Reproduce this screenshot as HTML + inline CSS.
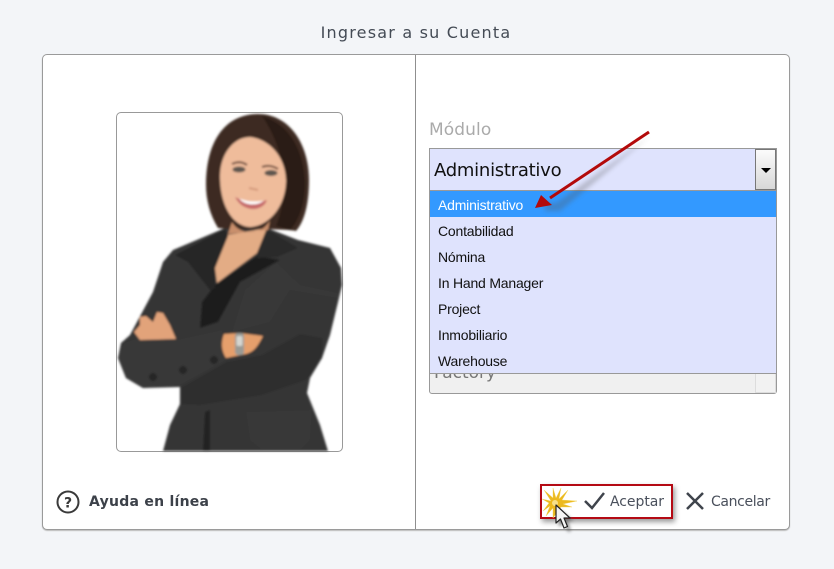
<!DOCTYPE html>
<html><head><meta charset="utf-8"><style>
html,body{margin:0;padding:0;width:834px;height:569px;overflow:hidden;background:#f3f5f8}
body{position:relative;font-family:"DejaVu Sans","Liberation Sans",sans-serif}
div{position:absolute;box-sizing:border-box;white-space:nowrap}
.it{left:430px;width:346px;height:26px;padding-left:8px;font:14px/26px "Liberation Sans",sans-serif;letter-spacing:-.2px;color:#111}
</style></head><body>
<div style="left:0;top:23px;width:832px;text-align:center;font-size:16px;line-height:20px;letter-spacing:1.2px;color:#444b55">Ingresar a su Cuenta</div>
<div style="left:42px;top:54px;width:748px;height:476px;background:#fff;border:1px solid #9a9a9a;border-radius:5px;box-shadow:0 1px 1px #bbb"></div>
<div style="left:415px;top:55px;width:1px;height:474px;background:#8f8f8f"></div>
<div style="left:116px;top:112px;width:227px;height:340px;background:#fff;border:1px solid #999;border-radius:5px"></div>

<svg style="position:absolute;left:0;top:0" width="834" height="569" viewBox="0 0 834 569">
<defs><filter id="b1" x="-5%" y="-5%" width="110%" height="110%"><feGaussianBlur stdDeviation="1"/></filter>
<filter id="b2" x="-30%" y="-30%" width="160%" height="160%"><feGaussianBlur stdDeviation="2.5"/></filter>
<filter id="b3" x="-30%" y="-30%" width="160%" height="160%"><feGaussianBlur stdDeviation="1.5"/></filter></defs>
<g filter="url(#b1)">
<path d="M173 250 L225 228 L267 228 L298 240 L330 248 L341 268 L342 285 L338 302 L330 335 L322 358 L310 378 L307 393 L320 425 L328 451 L163 451 L170 425 L180 404 L180 387 L143 388 L126 378 L118 358 L121 343 L130 335 L153 292 L163 262Z" fill="#343434"/>
<path d="M227 235 L267 228 L257 253 L217 283 L215 268Z" fill="#e3ac85"/>
<path d="M215 285 L257 256 L280 260 L240 282 L218 322 L200 328 L202 302Z" fill="#1f1f1f"/>
<path d="M175 255 L225 229 L228 236 L215 268 L215 288 L210 290 L188 262Z" fill="#272727"/>
<path d="M267 229 L298 248 L277 257 L257 258 L257 253Z" fill="#292929"/>
<path d="M276 262 L300 285 L338 293 L338 298 L290 290 L270 322 L232 332 L245 290Z" fill="#383838"/>
<path d="M124 343 L150 334 L176 340 L222 330 L226 360 L180 385 L143 388 L126 378 L118 358Z" fill="#373737"/>
<path d="M180 388 L226 362 L262 355 L300 334 L322 338 L322 358 L306 380 L262 395 L200 405 L180 404Z" fill="#2e2e2e"/>
<path d="M246 412 L312 410 L310 440 L300 450 L262 450 L250 440Z" fill="#383838"/>
<path d="M210 410 L210 451 L203 451 L205 412Z" fill="#242424"/>
<path d="M140 340 L134 332 L140 325 L140 317 L146 316 L153 322 L157 312 L163 313 L170 325 L176 339Z" fill="#e2a37a"/>
<path d="M224 334 L240 333 L263 336 C258 346 254 352 246 354 L226 358 C221 350 221 342 224 334Z" fill="#e59f6c"/>
<rect x="235" y="333" width="9" height="22" rx="3" fill="#9a9a94"/><rect x="236.500" y="336" width="6" height="10" rx="1.500" fill="#d5d5d0"/>
<circle cx="153" cy="377" r="4" fill="#262626"/><circle cx="183" cy="370" r="4" fill="#262626"/><circle cx="214" cy="360" r="4" fill="#262626"/>
<path d="M206 185 C206 140 226 114 258 114 C290 114 309 145 309 180 C309 205 304 222 296 231 C280 228 240 230 218 228 C210 215 206 200 206 185Z" fill="#3d2c24"/>
<path d="M262 116 C285 122 303 145 305 180 C306 200 300 220 290 230 L276 226 C290 190 285 150 262 116Z" fill="#2b1d18"/>
<path d="M232 222 C240 236 262 236 270 220 L268 230 L228 234Z" fill="#c98f6c"/>
<path d="M220 176 C220 155 233 137 250 137 C268 139 285 155 286 180 C286 205 270 226 250 227 C232 226 220 205 220 176Z" fill="#efbc9b"/>
<path d="M232 164 Q240 160 247 165 M262 167 Q270 164 278 169" stroke="#6b4a3a" stroke-width="2" fill="none"/>
<ellipse cx="239" cy="169.500" rx="6.500" ry="3" fill="#5e5650"/><ellipse cx="271" cy="173" rx="6.500" ry="3" fill="#5e5650"/>
<path d="M235 197 C245 202 258 203 267 200 C263 212 243 213 235 197Z" fill="#c76a6a"/>
<path d="M239 198.500 C246 201.500 256 202.500 264 200.500 C258 206 245 206 239 198.500Z" fill="#fff"/>
<path d="M249 188 L258 190" stroke="#d49a7b" stroke-width="2" fill="none"/>
</g>
</svg>

<div style="left:429px;top:121px;font-size:17px;line-height:18px;letter-spacing:.1px;color:#aaa">Módulo</div>
<div style="left:429px;top:148px;width:348px;height:43px;background:#dfe3fd;border:1px solid #999;border-bottom:0"></div>
<div style="left:434px;top:160px;font-size:18px;line-height:22px;letter-spacing:-.26px;color:#111">Administrativo</div>
<div style="left:755px;top:149px;width:21px;height:41px;background:linear-gradient(#fbfbfb,#d8d8d8);border:1px solid #777"></div>
<div style="left:761px;top:168px;width:0;height:0;border:5px solid transparent;border-top:5px solid #000;border-bottom:0"></div>

<div style="left:429px;top:350px;width:348px;height:44px;background:#f0f0f0;border:1px solid #999;border-radius:0 0 3px 3px"></div>
<div style="left:755px;top:352px;width:21px;height:41px;background:#f2f2f2;border:1px solid #ddd"></div>
<div style="left:434px;top:362px;font-size:17px;line-height:22px;color:#777">Factory</div>

<div style="left:429px;top:190px;width:348px;height:184px;background:#dfe3fd;border:1px solid #999"></div>
<div style="left:430px;top:191px;width:346px;height:26px;background:#3399ff"></div>
<div class="it" style="top:192px;color:#fff">Administrativo</div>
<div class="it" style="top:218px">Contabilidad</div>
<div class="it" style="top:244px">Nómina</div>
<div class="it" style="top:270px">In Hand Manager</div>
<div class="it" style="top:296px">Project</div>
<div class="it" style="top:322px">Inmobiliario</div>
<div class="it" style="top:348px">Warehouse</div>

<div style="left:89px;top:492px;font-size:14px;font-weight:bold;line-height:20px;letter-spacing:.26px;color:#3c4149">Ayuda en línea</div>
<div style="left:540px;top:484px;width:133px;height:35px;border:2px solid #b40a14;box-shadow:2px 3px 5px rgba(0,0,0,.4)"></div>
<div style="left:610px;top:492px;font-size:14px;line-height:20px;letter-spacing:-.05px;color:#4a505c">Aceptar</div>
<div style="left:711px;top:492px;font-size:14px;line-height:20px;letter-spacing:-.36px;color:#4a505c">Cancelar</div>

<svg style="position:absolute;left:0;top:0" width="834" height="569" viewBox="0 0 834 569">
<circle cx="68" cy="502" r="10.500" fill="none" stroke="#3a3a3a" stroke-width="2"/>
<text x="68" y="507.500" text-anchor="middle" font-family="DejaVu Sans" font-weight="bold" font-size="14" fill="#3a3a3a">?</text>
<path d="M585 501 L592 508 L604 493" fill="none" stroke="#3f444c" stroke-width="2.500"/>
<path d="M687 493 L703 509 M703 493 L687 509" fill="none" stroke="#3f444c" stroke-width="2.500"/>
<path d="M650 136 L556 203 L545 203 L545 211 L560 211Z" fill="#555" opacity=".3" filter="url(#b2)"/>
<path d="M649 132 L550 198" stroke="#b30a0a" stroke-width="3" fill="none"/>
<path d="M535 208 L541 195 L552 205Z" fill="#b30a0a"/>
<path d="M544 490 L553 498 L553 488 L556 498 L561 488 L559 499 L568 490 L562 500 L577 501 L563 504 L572 507 L561 507 L553 518 L553 508 L546 516 L550 506 L543 511 L549 503 L542 499 L551 501Z" fill="#ecb91f" stroke="#f3d45a" stroke-width=".4"/>
<circle cx="555" cy="503" r="3" fill="#f7e08a"/>
<path d="M559 509 L559 527 L564 523 L568 532 L571 531 L568 521 L574 521Z" fill="#555" opacity=".6" filter="url(#b3)"/>
<path d="M556 505 L556 523 L560.500 519 L564 528 L567.500 526.500 L564 518 L570 518Z" fill="#f4f4f4" stroke="#222" stroke-width="1.200" stroke-linejoin="round"/>
</svg>
</body></html>
